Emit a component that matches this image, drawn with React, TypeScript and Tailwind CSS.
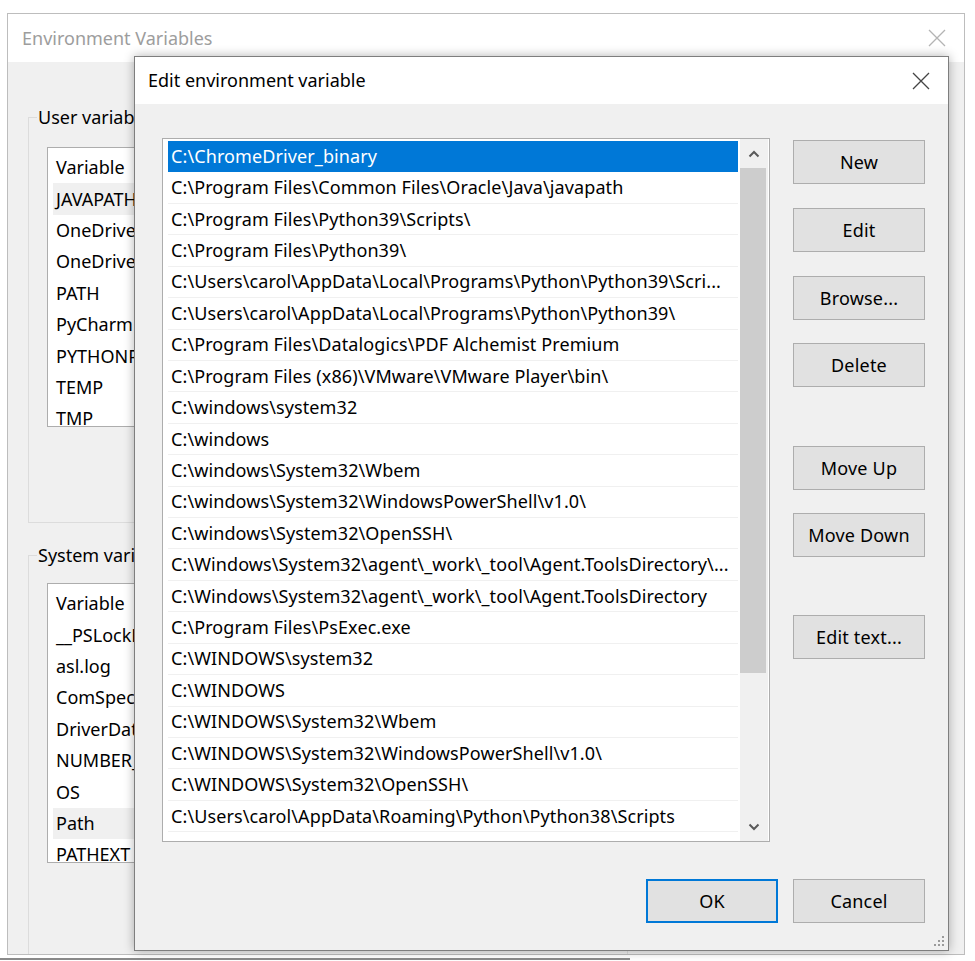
import React from "react";

const paths = [
  "C:\\ChromeDriver_binary",
  "C:\\Program Files\\Common Files\\Oracle\\Java\\javapath",
  "C:\\Program Files\\Python39\\Scripts\\",
  "C:\\Program Files\\Python39\\",
  "C:\\Users\\carol\\AppData\\Local\\Programs\\Python\\Python39\\Scri...",
  "C:\\Users\\carol\\AppData\\Local\\Programs\\Python\\Python39\\",
  "C:\\Program Files\\Datalogics\\PDF Alchemist Premium",
  "C:\\Program Files (x86)\\VMware\\VMware Player\\bin\\",
  "C:\\windows\\system32",
  "C:\\windows",
  "C:\\windows\\System32\\Wbem",
  "C:\\windows\\System32\\WindowsPowerShell\\v1.0\\",
  "C:\\windows\\System32\\OpenSSH\\",
  "C:\\Windows\\System32\\agent\\_work\\_tool\\Agent.ToolsDirectory\\...",
  "C:\\Windows\\System32\\agent\\_work\\_tool\\Agent.ToolsDirectory",
  "C:\\Program Files\\PsExec.exe",
  "C:\\WINDOWS\\system32",
  "C:\\WINDOWS",
  "C:\\WINDOWS\\System32\\Wbem",
  "C:\\WINDOWS\\System32\\WindowsPowerShell\\v1.0\\",
  "C:\\WINDOWS\\System32\\OpenSSH\\",
  "C:\\Users\\carol\\AppData\\Roaming\\Python\\Python38\\Scripts",
  "",
];

const userVars = ["JAVAPATH", "OneDrive", "OneDrive", "PATH", "PyCharm", "PYTHONPATH", "TEMP", "TMP"];
const sysVars = ["__PSLockDownPolicy", "asl.log", "ComSpec", "DriverData", "NUMBER_OF_PROCESSORS", "OS", "Path", "PATHEXT"];

function CloseX({ color, size = 18 }: { color: string; size?: number }) {
  return (
    <svg width={size} height={size} viewBox="0 0 18 18">
      <path d="M1 1 L17 17 M17 1 L1 17" stroke={color} strokeWidth="1.3" fill="none" />
    </svg>
  );
}

function Btn({ label, primary }: { label: string; primary?: boolean }) {
  return (
    <div
      className={
        "w-[132px] h-[44px] flex items-center justify-center bg-[#e1e1e1] text-[18px] tracking-[0.2px] text-black " +
        (primary ? "border-2 border-[#0078d7]" : "border border-[#adadad]")
      }
    >
      {label}
    </div>
  );
}

function VarList({ items, highlight }: { items: string[]; highlight: number }) {
  return (
    <div className="w-[100px] h-[280px] bg-white border border-[#adadad] overflow-hidden pt-[4px] pl-[5px]">
      <div className="h-[31.4px] flex items-center pl-[3px] text-[18px]">Variable</div>
      {items.map((v, i) => (
        <div
          key={i}
          className={
            "h-[31.4px] flex items-center pl-[3px] text-[18px] whitespace-nowrap " +
            (i === highlight ? "bg-[#f0f0f0]" : "")
          }
        >
          {v}
        </div>
      ))}
    </div>
  );
}

function Chevron({ up }: { up?: boolean }) {
  return (
    <svg width="12" height="8" viewBox="0 0 12 8">
      <path
        d={up ? "M1.5 6.5 L6 2 L10.5 6.5" : "M1.5 1.5 L6 6 L10.5 1.5"}
        stroke="#5a5a5a"
        strokeWidth="2"
        fill="none"
      />
    </svg>
  );
}

export default function App() {
  return (
    <div
      className="relative w-[975px] h-[961px] bg-white overflow-hidden pt-[13px] pl-[7px] text-black"
      style={{ fontFamily: '"Noto Sans", "Open Sans", sans-serif' }}
    >
      {/* Back window: Environment Variables */}
      <div className="w-[958px] h-[942px] border border-[#bdbdbd] flex flex-col overflow-hidden">
        <div className="h-[48px] bg-white flex items-center justify-between pl-[14px] pr-[18px] shrink-0">
          <span className="text-[18px] text-[#9d9d9d]">Environment Variables</span>
          <CloseX color="#b4b4b4" />
        </div>
        <div className="flex-1 bg-[#f0f0f0] pl-[20px] pt-[43px]">
          <fieldset className="w-[600px] h-[418px] border border-[#dcdcdc] pl-[9px]">
            <legend className="-ml-[1px] px-[1px] text-[18px] leading-[24px]">User variables for carol</legend>
            <div className="ml-[9px] mt-[18px]">
              <VarList items={userVars} highlight={0} />
            </div>
          </fieldset>
          <fieldset className="w-[600px] h-[500px] mt-[20px] border border-[#dcdcdc] pl-[9px]">
            <legend className="-ml-[1px] px-[1px] text-[18px] leading-[24px]">System variables</legend>
            <div className="ml-[9px] mt-[16px]">
              <VarList items={sysVars} highlight={6} />
            </div>
          </fieldset>
        </div>
      </div>
      <div className="mt-[3px] -ml-[7px] w-[630px] h-[2px] bg-[#8a8a8a]" />

      {/* Front dialog: Edit environment variable */}
      <div className="absolute left-[134px] top-[56px] w-[815px] h-[895px] border border-[#7e7e7e] shadow-[0_0_10px_rgba(0,0,0,0.3)] flex flex-col bg-[#f0f0f0]">
        <div className="h-[47px] bg-white flex items-center justify-between pl-[13px] pr-[18px] shrink-0">
          <span className="text-[18px]">Edit environment variable</span>
          <CloseX color="#444444" />
        </div>
        <div className="relative flex-1 pl-[27px] pt-[34px]">
          <div className="w-[763px] flex flex-col">
            <div className="flex gap-[23px]">
              <div className="w-[608px] h-[704px] bg-white border border-[#adadad] flex">
                <div className="w-[577px] pl-[5px] pt-[2px] overflow-hidden">
                  {paths.map((p, i) => (
                    <div
                      key={i}
                      className={
                        "w-[570px] h-[31.43px] flex items-center pl-[3px] text-[18px] tracking-[0.1px] whitespace-nowrap overflow-hidden " +
                        (i === 0 ? "bg-[#0078d7] text-white" : "border-b border-[#f0f0f0]")
                      }
                    >
                      {p}
                    </div>
                  ))}
                </div>
                <div className="w-[28px] h-full flex flex-col bg-[#f0f0f0]">
                  <div className="h-[29px] flex items-center justify-center">
                    <Chevron up />
                  </div>
                  <div className="h-[505px] w-[26px] bg-[#cdcdcd]" />
                  <div className="flex-1" />
                  <div className="h-[29px] flex items-center justify-center">
                    <Chevron />
                  </div>
                </div>
              </div>
              <div className="flex flex-col pt-[2px]">
                <Btn label="New" />
                <div className="mt-[24px]"><Btn label="Edit" /></div>
                <div className="mt-[24px]"><Btn label="Browse..." /></div>
                <div className="mt-[23px]"><Btn label="Delete" /></div>
                <div className="mt-[59px]"><Btn label="Move Up" /></div>
                <div className="mt-[23px]"><Btn label="Move Down" /></div>
                <div className="mt-[58px]"><Btn label="Edit text..." /></div>
              </div>
            </div>
            <div className="flex justify-end gap-[15px] mt-[37px]">
              <Btn label="OK" primary />
              <Btn label="Cancel" />
            </div>
          </div>
          <svg className="absolute right-[3px] bottom-[3px]" width="12" height="12" viewBox="0 0 12 12">
            <g fill="#9a9a9a">
              <rect x="9" y="1" width="2" height="2" />
              <rect x="5" y="5" width="2" height="2" />
              <rect x="9" y="5" width="2" height="2" />
              <rect x="1" y="9" width="2" height="2" />
              <rect x="5" y="9" width="2" height="2" />
              <rect x="9" y="9" width="2" height="2" />
            </g>
          </svg>
        </div>
      </div>
    </div>
  );
}
